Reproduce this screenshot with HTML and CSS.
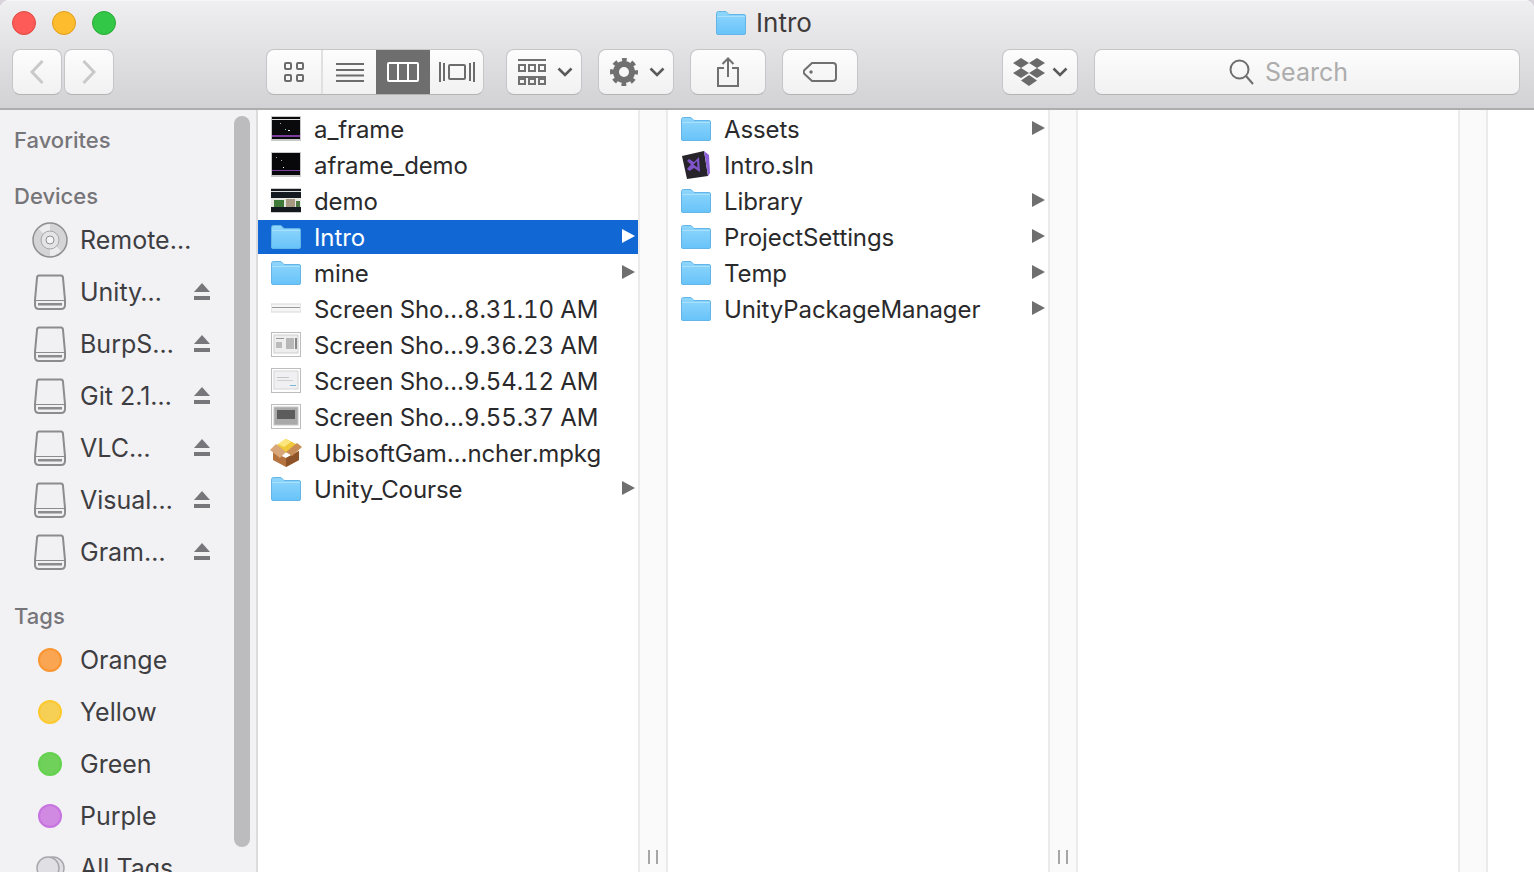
FILE: index.html
```html
<!DOCTYPE html>
<html>
	<head>
		<meta charset="utf-8">
		<title>Intro</title>
		<link rel="stylesheet" href="styles.css">
	</head>
	<body>
		<!-- shared icons -->
		<svg class="defs" width="0" height="0">
			<defs>
				<linearGradient id="folderFill" x1="0" y1="0" x2="0" y2="1">
					<stop offset="0" stop-color="#8fd6fc"/>
					<stop offset="1" stop-color="#68c3f9"/>
				</linearGradient>
				<symbol id="folder" viewBox="0 0 30 24">
					<path d="M0.5 2.5Q0.5 0.5 2.5 0.5H10L13 3.5H28Q29.5 3.5 29.5 5V22Q29.5 23.5 28 23.5H2Q0.5 23.5 0.5 22Z" fill="url(#folderFill)" stroke="#62b5e6" stroke-width="1"/>
					<path d="M1 5.500H29" stroke="#a9e0fd" stroke-width="1"/>
				</symbol>
				<symbol id="arrow" viewBox="0 0 13 14">
					<path d="M0 0L13 7L0 14Z"/>
				</symbol>
				<symbol id="drive" viewBox="0 0 32 36">
					<path d="M5 1.500H27Q29 1.500 29 4L31 26V31Q31 35 27 35H5Q1 35 1 31V26L3 4Q3 1.500 5 1.500Z" fill="#f1f0f3" stroke="#8c8c8c" stroke-width="2"/>
					<path d="M1 26.500H31" stroke="#8c8c8c" stroke-width="1"/>
					<rect x="4" y="29" width="24" height="2.500" fill="#8c8c8c"/>
				</symbol>
				<symbol id="eject" viewBox="0 0 16 18">
					<path d="M8 0L16 9H0Z"/>
					<rect y="13" width="16" height="4"/>
				</symbol>
				<symbol id="chev" viewBox="0 0 16 10">
					<path d="M1.500 1.500L8 8L14.500 1.500" fill="none" stroke="#5a5a5a" stroke-width="2.600"/>
				</symbol>
			</defs>
		</svg>

		<div class="window">
			<header class="titlebar">
				<div class="title-row">
					<div class="lights">
						<span class="light red"></span>
						<span class="light amber"></span>
						<span class="light green"></span>
					</div>
					<div class="title">
						<svg class="ico-folder"><use href="#folder"/></svg>
						<span>Intro</span>
					</div>
					<div></div>
				</div>
				<div class="toolbar">
					<div class="nav-group">
						<button class="btn nav-btn">
							<svg width="14" height="24" viewBox="0 0 14 24"><path d="M12.500 1L2 12L12.500 23" fill="none" stroke="#c9c9c9" stroke-width="3"/></svg>
						</button>
						<button class="btn nav-btn">
							<svg width="14" height="24" viewBox="0 0 14 24"><path d="M1.500 1L12 12L1.500 23" fill="none" stroke="#c9c9c9" stroke-width="3"/></svg>
						</button>
					</div>
					<div class="btn view-group">
						<div class="seg seg-first">
							<svg width="20" height="20" viewBox="0 0 20 20" fill="none" stroke="#6c6c6c" stroke-width="2">
								<rect x="1" y="1" width="6" height="6" rx="1"/><rect x="13" y="1" width="6" height="6" rx="1"/>
								<rect x="1" y="13" width="6" height="6" rx="1"/><rect x="13" y="13" width="6" height="6" rx="1"/>
							</svg>
						</div>
						<div class="seg seg-list">
							<svg width="28" height="20" viewBox="0 0 28 20" stroke="#6c6c6c" stroke-width="2">
								<path d="M0 2H28M0 8H28M0 13.500H28M0 19H28"/>
							</svg>
						</div>
						<div class="seg seg-active">
							<svg width="32" height="20" viewBox="0 0 32 20" fill="none" stroke="#fff" stroke-width="2">
								<rect x="1" y="1" width="30" height="18" rx="1"/><path d="M11 1V19M21 1V19"/>
							</svg>
						</div>
						<div class="seg seg-flow">
							<svg width="36" height="20" viewBox="0 0 36 20" fill="none" stroke="#6c6c6c" stroke-width="2">
								<rect x="10" y="3" width="16" height="14" rx="1"/>
								<path d="M1 0V20M5 1V19M35 0V20M31 1V19"/>
							</svg>
						</div>
					</div>
					<button class="btn tool-btn has-menu">
						<svg width="28" height="26" viewBox="0 0 28 26" fill="none" stroke="#707070" stroke-width="2">
							<path d="M0 1H28M0 18H28"/>
							<rect x="1" y="6" width="6" height="6"/><rect x="11" y="6" width="6" height="6"/><rect x="21" y="6" width="6" height="6"/>
							<rect x="1" y="20" width="6" height="5"/><rect x="11" y="20" width="6" height="5"/><rect x="21" y="20" width="6" height="5"/>
						</svg>
						<svg class="chev"><use href="#chev"/></svg>
					</button>
					<button class="btn tool-btn has-menu">
						<svg width="28" height="28" viewBox="0 0 28 28" fill="none" stroke="#707070">
							<circle cx="14" cy="14" r="8" stroke-width="6"/>
							<circle cx="14" cy="14" r="11.500" stroke-width="5" stroke-dasharray="4.500 4.530" stroke-dashoffset="2.250"/>
						</svg>
						<svg class="chev"><use href="#chev"/></svg>
					</button>
					<button class="btn tool-btn">
						<svg width="22" height="30" viewBox="0 0 22 30" fill="none" stroke="#707070" stroke-width="2">
							<path d="M7 11H1V29H21V11H15M11 20V1.500M5.500 7L11 1.500L16.500 7"/>
						</svg>
					</button>
					<button class="btn tool-btn">
						<svg width="34" height="20" viewBox="0 0 34 20" fill="none" stroke="#707070" stroke-width="2">
							<path d="M9 1H30Q33 1 33 4V16Q33 19 30 19H9L1.500 12Q0 10 1.500 8Z"/>
							<circle cx="8" cy="10" r="1.700" fill="#707070" stroke="none"/>
						</svg>
					</button>
					<button class="btn tool-btn has-menu dropbox-btn">
						<svg width="32" height="28" viewBox="0 0 32 28" fill="#6a6a6a">
							<path d="M8 0L16 5L8 10L0 5ZM24 0L32 5L24 10L16 5ZM8 10L16 15L8 20L0 15ZM24 10L32 15L24 20L16 15ZM16 17L24 22.500L16 28L8 22.500Z"/>
						</svg>
						<svg class="chev"><use href="#chev"/></svg>
					</button>
					<div class="btn search">
						<svg width="25" height="26" viewBox="0 0 25 26" fill="none" stroke="#6e6e6e" stroke-width="2">
							<circle cx="10.500" cy="10.500" r="9"/><path d="M17 17L24 25"/>
						</svg>
						<span>Search</span>
					</div>
				</div>
			</header>

			<div class="content">
				<aside class="sidebar">
					<div class="side-head head-first">Favorites</div>
					<div class="side-head head-devices">Devices</div>
					<div class="side-item">
						<svg class="disc" width="36" height="36" viewBox="0 0 36 36">
							<circle cx="18" cy="18" r="17" fill="#d4d4d6" stroke="#8f8f8f" stroke-width="1.500"/>
							<path d="M18 18L7 7A16 16 0 0 1 18 2ZM18 18L29 29A16 16 0 0 1 18 34Z" fill="#ececee"/>
							<circle cx="18" cy="18" r="9" fill="#e4e4e6" stroke="#a5a5a5"/>
							<circle cx="18" cy="18" r="4" fill="#f4f4f6" stroke="#8f8f8f"/>
						</svg>
						<span class="side-name">Remote…</span>
					</div>
					<div class="side-item">
						<svg class="drive" width="32" height="36"><use href="#drive"/></svg>
						<span class="side-name">Unity…</span>
						<svg class="eject"><use href="#eject"/></svg>
					</div>
					<div class="side-item">
						<svg class="drive" width="32" height="36"><use href="#drive"/></svg>
						<span class="side-name">BurpS…</span>
						<svg class="eject"><use href="#eject"/></svg>
					</div>
					<div class="side-item">
						<svg class="drive" width="32" height="36"><use href="#drive"/></svg>
						<span class="side-name">Git 2.1…</span>
						<svg class="eject"><use href="#eject"/></svg>
					</div>
					<div class="side-item">
						<svg class="drive" width="32" height="36"><use href="#drive"/></svg>
						<span class="side-name">VLC…</span>
						<svg class="eject"><use href="#eject"/></svg>
					</div>
					<div class="side-item">
						<svg class="drive" width="32" height="36"><use href="#drive"/></svg>
						<span class="side-name">Visual…</span>
						<svg class="eject"><use href="#eject"/></svg>
					</div>
					<div class="side-item">
						<svg class="drive" width="32" height="36"><use href="#drive"/></svg>
						<span class="side-name">Gram…</span>
						<svg class="eject"><use href="#eject"/></svg>
					</div>
					<div class="side-head head-tags">Tags</div>
					<div class="side-item">
						<span class="side-ico"><span class="dot orange"></span></span>
						<span class="side-name">Orange</span>
					</div>
					<div class="side-item">
						<span class="side-ico"><span class="dot yellow"></span></span>
						<span class="side-name">Yellow</span>
					</div>
					<div class="side-item">
						<span class="side-ico"><span class="dot lime"></span></span>
						<span class="side-name">Green</span>
					</div>
					<div class="side-item">
						<span class="side-ico"><span class="dot purple"></span></span>
						<span class="side-name">Purple</span>
					</div>
					<div class="side-item">
						<span class="side-ico">
							<svg width="32" height="26" viewBox="0 0 32 26" fill="#e0e0e4" stroke="#a8a8ac" stroke-width="1.500">
								<circle cx="19" cy="13" r="11"/><circle cx="14" cy="13" r="11"/>
							</svg>
						</span>
						<span class="side-name">All Tags</span>
					</div>
					<div class="scrollbar"></div>
				</aside>

				<section class="column">
					<div class="row">
						<svg class="thumb" width="30" height="26" viewBox="0 0 30 26">
							<rect x="0" y="0" width="30" height="25" fill="#c9c9c9"/>
							<rect x="1" y="1" width="28" height="22" fill="#0a0a0c"/>
							<rect x="1" y="3" width="28" height="1" fill="#ddd"/>
							<rect x="1" y="19" width="28" height="2" fill="#7a3f9e"/>
							<rect x="9" y="7" width="1" height="1" fill="#aaa"/><rect x="17" y="14" width="2" height="1" fill="#fff"/><rect x="14" y="13" width="1" height="1" fill="#8cc"/>
						</svg>
						<span class="name">a_frame</span>
					</div>
					<div class="row">
						<svg class="thumb" width="30" height="26" viewBox="0 0 30 26">
							<rect x="0" y="0" width="30" height="25" fill="#c9c9c9"/>
							<rect x="1" y="1" width="28" height="22" fill="#08080a"/>
							<rect x="1" y="18" width="28" height="1" fill="#7a3f9e"/>
							<rect x="5" y="5" width="1" height="1" fill="#aaa"/><rect x="10" y="8" width="1" height="1" fill="#aaa"/><rect x="12" y="15" width="1" height="1" fill="#fff"/>
						</svg>
						<span class="name">aframe_demo</span>
					</div>
					<div class="row">
						<svg class="thumb" width="30" height="26" viewBox="0 0 30 26">
							<rect x="0" y="0" width="30" height="25" fill="#c9c9c9"/>
							<rect x="0" y="1" width="30" height="23" fill="#14191f"/>
							<rect x="0" y="3" width="30" height="1" fill="#ddd"/>
							<rect x="0" y="10" width="30" height="9" fill="#e7e9e2"/>
							<rect x="3" y="12" width="10" height="7" fill="#3f7a38"/><rect x="15" y="11" width="9" height="8" fill="#a89a82"/>
							<rect x="25" y="13" width="4" height="6" fill="#4d7a44"/>
						</svg>
						<span class="name">demo</span>
					</div>
					<div class="row selected">
						<svg class="ico-folder"><use href="#folder"/></svg>
						<span class="name">Intro</span>
						<svg class="arrow"><use href="#arrow"/></svg>
					</div>
					<div class="row">
						<svg class="ico-folder"><use href="#folder"/></svg>
						<span class="name">mine</span>
						<svg class="arrow"><use href="#arrow"/></svg>
					</div>
					<div class="row">
						<svg class="thumb" width="30" height="26" viewBox="0 0 30 26">
							<rect x="0" y="8" width="30" height="8" fill="#f6f6f6" stroke="#d8d8d8" stroke-width="1"/>
							<rect x="1" y="11" width="28" height="1" fill="#9a9a9a"/>
						</svg>
						<span class="name">Screen Sho…8.31.10 AM</span>
					</div>
					<div class="row">
						<svg class="thumb" width="30" height="26" viewBox="0 0 30 26">
							<rect x="0.500" y="0.500" width="29" height="24" fill="#fdfdfd" stroke="#bdbdbd"/>
							<rect x="3" y="3" width="24" height="18" fill="#eeeeee" stroke="#cfcfcf"/>
							<rect x="5" y="6" width="8" height="1" fill="#999"/><rect x="5" y="10" width="6" height="6" fill="#bbb"/>
							<rect x="15" y="6" width="8" height="11" fill="#b8b8b8"/><rect x="24" y="6" width="2" height="11" fill="#888"/>
						</svg>
						<span class="name">Screen Sho…9.36.23 AM</span>
					</div>
					<div class="row">
						<svg class="thumb" width="30" height="26" viewBox="0 0 30 26">
							<rect x="0.500" y="0.500" width="29" height="24" fill="#fdfdfd" stroke="#bdbdbd"/>
							<rect x="3" y="3" width="24" height="18" fill="#f0f0f2" stroke="#d5d5d5"/>
							<rect x="6" y="9" width="12" height="1" fill="#c5c5c5"/><rect x="6" y="12" width="16" height="1" fill="#d0d0d0"/>
							<rect x="19" y="17" width="6" height="1" fill="#7ab8d8"/>
						</svg>
						<span class="name">Screen Sho…9.54.12 AM</span>
					</div>
					<div class="row">
						<svg class="thumb" width="30" height="26" viewBox="0 0 30 26">
							<rect x="0.500" y="0.500" width="29" height="24" fill="#fdfdfd" stroke="#bdbdbd"/>
							<rect x="3" y="3" width="24" height="18" fill="#a9a9a9" stroke="#c5c5c5"/>
							<rect x="6" y="6" width="18" height="9" fill="#5c5c5c"/>
						</svg>
						<span class="name">Screen Sho…9.55.37 AM</span>
					</div>
					<div class="row">
						<svg class="thumb pkg" width="32" height="30" viewBox="0 0 32 30">
							<path d="M4 9L16 1L28 7L16 15Z" fill="#f0c93a"/>
							<path d="M15 1L21 4L14 9L8 6Z" fill="#fbe77e"/>
							<path d="M3 14L16 20L29 13V22L16 29L3 22Z" fill="#b5743f"/>
							<path d="M16 20L29 13V22L16 29Z" fill="#8e5429"/>
							<path d="M0 12L6 6L16 14L10 20Z" fill="#d8a678"/>
							<path d="M32 9L27 5L16 14L22 18Z" fill="#c98d58"/>
						</svg>
						<span class="name">UbisoftGam…ncher.mpkg</span>
					</div>
					<div class="row">
						<svg class="ico-folder"><use href="#folder"/></svg>
						<span class="name">Unity_Course</span>
						<svg class="arrow"><use href="#arrow"/></svg>
					</div>
				</section>
				<div class="divider"><i></i><i></i></div>

				<section class="column">
					<div class="row">
						<svg class="ico-folder"><use href="#folder"/></svg>
						<span class="name">Assets</span>
						<svg class="arrow"><use href="#arrow"/></svg>
					</div>
					<div class="row">
						<svg class="thumb" width="30" height="30" viewBox="0 0 30 30">
							<path d="M1 6L23 1L27 26L6 29Z" fill="#26232b"/>
							<path d="M23 1L28 5L29 23L27 26Z" fill="#8e62d9"/>
							<path d="M18 7L19 22L13 18L8.500 21L6 19L10 14.500L6 11L8 9L13 12Z" fill="#7f55c9"/>
							<path d="M16 11L16.500 17.500L12.500 14.500Z" fill="#26232b"/>
						</svg>
						<span class="name">Intro.sln</span>
					</div>
					<div class="row">
						<svg class="ico-folder"><use href="#folder"/></svg>
						<span class="name">Library</span>
						<svg class="arrow"><use href="#arrow"/></svg>
					</div>
					<div class="row">
						<svg class="ico-folder"><use href="#folder"/></svg>
						<span class="name">ProjectSettings</span>
						<svg class="arrow"><use href="#arrow"/></svg>
					</div>
					<div class="row">
						<svg class="ico-folder"><use href="#folder"/></svg>
						<span class="name">Temp</span>
						<svg class="arrow"><use href="#arrow"/></svg>
					</div>
					<div class="row">
						<svg class="ico-folder"><use href="#folder"/></svg>
						<span class="name">UnityPackageManager</span>
						<svg class="arrow"><use href="#arrow"/></svg>
					</div>
				</section>
				<div class="divider"><i></i><i></i></div>

				<section class="column"></section>
				<div class="divider no-grip"></div>
				<section class="column-rest"></section>
			</div>
		</div>
	</body>
</html>
```

FILE: styles.css
```css
*{
	margin: 0;
	padding: 0;
	box-sizing: border-box;
}
html,body{
	height: 100%;
	overflow: hidden;
	background-color: #d9d4dc;
}
body{
	font-family: Inter, "Noto Sans", "Liberation Sans", sans-serif;
	font-size: 25px;
	color: #2a2a2c;
}
.defs{
	display: block;
	height: 0;
}
.window{
	display: flex;
	flex-direction: column;
	height: 872px;
	overflow: hidden;
	border-radius: 9px 9px 0 0;
	background-color: #fff;
}

/* title bar and toolbar */
.titlebar{
	flex: none;
	height: 110px;
	background: linear-gradient(#efeef0, #d2d1d3);
	border-bottom: 2px solid #adadad;
	border-top: 1px solid #f6f5f7;
}
.title-row{
	display: grid;
	grid-template-columns: 1fr auto 1fr;
	align-items: center;
	height: 43px;
	padding-left: 12px;
}
.lights{
	display: flex;
	gap: 16px;
}
.light{
	width: 24px;
	height: 24px;
	border-radius: 50%;
	border: 1px solid;
}
.red{
	background-color: #fc5b57;
	border-color: #e2463f;
}
.amber{
	background-color: #fdbc2e;
	border-color: #e09e1a;
}
.green{
	background-color: #33c748;
	border-color: #27aa35;
}
.title{
	display: flex;
	align-items: center;
	gap: 10px;
	margin-right: 18px;
	font-size: 26px;
	color: #3e3a3a;
}
.ico-folder{
	flex: none;
	width: 30px;
	height: 24px;
}
.toolbar{
	display: flex;
	align-items: flex-start;
	padding: 5px 14px 0 12px;
}
.btn{
	height: 46px;
	background: linear-gradient(#fdfdfd, #f1f1f1);
	border: 1px solid #c6c5c7;
	border-bottom-color: #b4b3b5;
	border-radius: 8px;
	font: inherit;
}
.nav-group{
	display: flex;
	gap: 2px;
	margin-right: 152px;
}
.nav-btn{
	display: flex;
	align-items: center;
	justify-content: center;
	width: 50px;
}
.view-group{
	display: flex;
	width: 218px;
	overflow: hidden;
	margin-right: 22px;
}
.seg{
	display: flex;
	align-items: center;
	justify-content: center;
	height: 100%;
}
.seg-first{
	width: 56px;
	border-right: 2px solid #e0e0e0;
}
.seg-list{
	width: 53px;
}
.seg-active{
	width: 54px;
	background-color: #6e6e6e;
}
.seg-flow{
	width: 53px;
}
.tool-btn{
	display: flex;
	align-items: center;
	justify-content: center;
	width: 76px;
	margin-right: 16px;
}
.has-menu{
	justify-content: flex-start;
	gap: 11px;
	padding-left: 11px;
}
.chev{
	width: 16px;
	height: 10px;
}
.dropbox-btn{
	gap: 7px;
	padding-left: 10px;
	margin-left: 128px;
}
.search{
	display: flex;
	align-items: center;
	justify-content: center;
	gap: 11px;
	width: 426px;
	color: #adadad;
	padding-right: 37px;
}

/* main area */
.content{
	flex: 1;
	display: flex;
	min-height: 0;
}
.sidebar{
	position: relative;
	flex: none;
	width: 258px;
	padding-top: 16px;
	overflow: hidden;
	background-color: #f2f1f4;
	border-right: 2px solid #dcdcde;
}
.side-head{
	height: 28px;
	line-height: 28px;
	padding-left: 14px;
	font-size: 22px;
	font-weight: 500;
	color: #767579;
}
.head-devices{
	margin-top: 28px;
	margin-bottom: 4px;
}
.head-tags{
	margin-top: 24px;
	margin-bottom: 4px;
}
.side-item{
	display: flex;
	align-items: center;
	height: 52px;
	padding-left: 32px;
	color: #3e3e42;
}
.side-ico,.disc{
	display: flex;
	align-items: center;
	justify-content: center;
	flex: none;
	width: 36px;
	margin-right: 12px;
}
.drive{
	flex: none;
	width: 32px;
	margin: 0 14px 0 2px;
}
.side-name{
	width: 114px;
	white-space: nowrap;
}
.eject{
	flex: none;
	width: 16px;
	height: 18px;
	fill: #77767a;
}
.dot{
	width: 24px;
	height: 24px;
	border-radius: 50%;
	border: 2px solid;
}
.orange{
	background-color: #f9a552;
	border-color: #fa9632;
}
.yellow{
	background-color: #f6cf55;
	border-color: #fdc92e;
}
.lime{
	background-color: #6fd05a;
	border-color: #63d24d;
}
.purple{
	background-color: #d08ae2;
	border-color: #c773e0;
}
.scrollbar{
	position: absolute;
	top: 6px;
	left: 234px;
	width: 16px;
	height: 731px;
	border-radius: 8px;
	background-color: #bcbbbd;
}
.column{
	flex: none;
	width: 380px;
	padding-top: 2px;
	background-color: #fff;
}
.column-rest{
	flex: 1;
}
.row{
	display: flex;
	align-items: center;
	height: 34px;
	margin-bottom: 2px;
	padding: 0 3px 0 13px;
	white-space: nowrap;
	font-size: 24px;
	letter-spacing: -0.1px;
	font-variant-numeric: tabular-nums;
}
.thumb{
	flex: none;
}
.pkg{
	margin: 0 -1px;
}
.name{
	flex: 1;
	margin-left: 13px;
}
.arrow{
	flex: none;
	width: 13px;
	height: 14px;
	margin-bottom: 2px;
	fill: #6f6f6f;
}
.selected{
	background-color: #1167d4;
	color: #fff;
}
.selected .arrow{
	fill: #fff;
}
.divider{
	display: flex;
	flex: none;
	align-items: flex-end;
	justify-content: center;
	gap: 6px;
	width: 30px;
	padding-bottom: 8px;
	background-color: #fafafa;
	border-left: 2px solid #ebebeb;
	border-right: 2px solid #ebebeb;
}
.divider i{
	width: 2px;
	height: 14px;
	background-color: #a6a6a6;
}
```
